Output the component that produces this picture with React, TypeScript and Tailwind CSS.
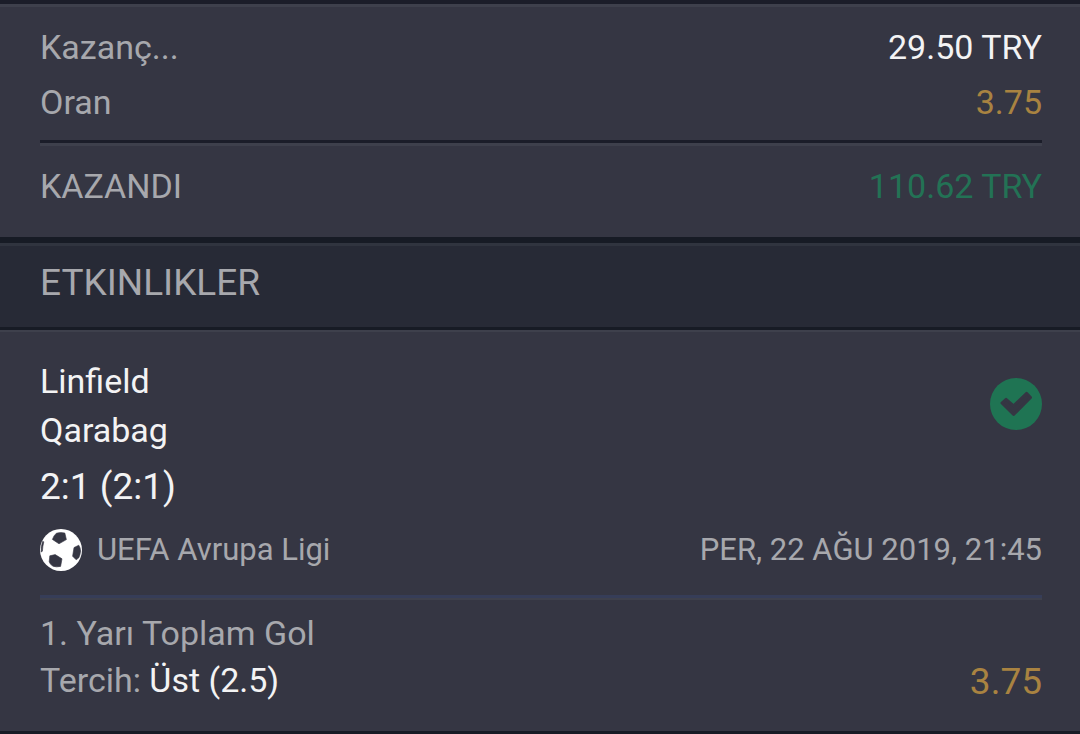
import React from 'react';

interface RowProps {
  label: string;
  value: string;
  className?: string;
  valueClassName: string;
}

const Row: React.FC<RowProps> = ({ label, value, className = '', valueClassName }) => (
  <div className={`flex items-center justify-between ${className}`}>
    <dt>{label}</dt>
    <dd className={valueClassName}>{value}</dd>
  </div>
);

const WonIcon: React.FC = () => (
  <svg viewBox="0 0 52 52" className="mt-[17px] size-[52px] shrink-0" role="img" aria-label="Kazandı">
    <circle cx="26" cy="26" r="26" fill="#1f7453" />
    <path
      d="M11.9 25 L16.1 21.2 L23.6 27.8 L36.6 15.2 L40.6 19.4 L23.6 36.6 Z"
      fill="#353643"
      stroke="#353643"
      strokeWidth="2.8"
      strokeLinejoin="round"
    />
  </svg>
);

const Football: React.FC = () => (
  <svg viewBox="0 0 42 42" className="size-[42px] shrink-0" aria-hidden="true">
    <circle cx="21" cy="21" r="21" fill="#fff" />
    <g fill="#353643" stroke="#353643" strokeWidth="0.6" strokeLinejoin="round">
      <path d="M16.4 4.2 Q20.5 3 24.8 4 L26.4 10.6 L19 14.8 L12.4 10.4 Q13.6 6.6 16.4 4.2 Z" />
      <path d="M34 18.6 L38.8 16.2 Q40.4 18.6 40.6 22 Q40.2 26 38.8 28.8 L36.2 30.8 L32.6 27.2 Z" />
      <path d="M9.8 26.8 L15.2 25.6 L22 29.8 L20.6 37.4 Q16.4 38.4 13 37.2 Q10 35.6 9.2 32.8 Z" />
      <path d="M2.6 12.4 L3.8 12.8 Q2.6 17.6 2.4 22.2 L1.2 23 Q0.8 17.4 2.6 12.4 Z" />
    </g>
  </svg>
);

const App: React.FC = () => {
  return (
    <main className="min-h-screen bg-[#353643] font-['Roboto',sans-serif] text-[34px] leading-10 text-[#a7a8ad]">
      <section className="border-t-4 border-[#1b1d29] pt-[23px] pr-[38px] pb-[31px] pl-10 shadow-[inset_0_3px_0_#3e404c]">
        <dl>
          <Row label="Kazanç..." value="29.50 TRY" className="pb-[15px]" valueClassName="text-[#f3f3f4]" />
          <Row label="Oran" value="3.75" className="pb-[18px]" valueClassName="text-[#a98341]" />
          <Row
            label="KAZANDI"
            value="110.62 TRY"
            className="border-t-3 border-[#1b1d29] pt-[23px] shadow-[inset_0_3px_0_#3e404c]"
            valueClassName="text-[#237255]"
          />
        </dl>
      </section>

      <h2 className="border-t-6 border-b-3 border-[#171b25] bg-[#272a36] pt-5 pr-[38px] pb-6 pl-10 text-[37px] leading-10 shadow-[inset_0_3px_0_#30343f]">
        ETKINLIKLER
      </h2>

      <section className="border-b-4 border-[#171b25] pt-[31px] pr-[38px] pb-[31px] pl-10 shadow-[inset_0_2px_0_#3e404c]">
        <div className="flex items-start justify-between text-[#f3f3f4]">
          <div>
            <p className="pb-[9px]">Linfield</p>
            <p className="pb-[17px]">Qarabag</p>
            <p className="text-[37px] leading-10">2:1 (2:1)</p>
          </div>
          <WonIcon />
        </div>
        <div className="flex items-center justify-between border-b-3 border-[#363d58] pt-[22px] pb-6 text-[31px]">
          <div className="flex items-center gap-[15px]">
            <Football />
            <span>UEFA Avrupa Ligi</span>
          </div>
          <time dateTime="2019-08-22T21:45">PER, 22 AĞU 2019, 21:45</time>
        </div>
        <div className="flex items-end justify-between pt-[15px] shadow-[inset_0_2px_0_#3e404c]">
          <div>
            <p className="pb-[7px]">1. Yarı Toplam Gol</p>
            <p>Tercih: <span className="text-[#f3f3f4]">Üst (2.5)</span></p>
          </div>
          <span className="text-[37px] leading-9 text-[#a98341]">3.75</span>
        </div>
      </section>
    </main>
  );
};

export default App;
